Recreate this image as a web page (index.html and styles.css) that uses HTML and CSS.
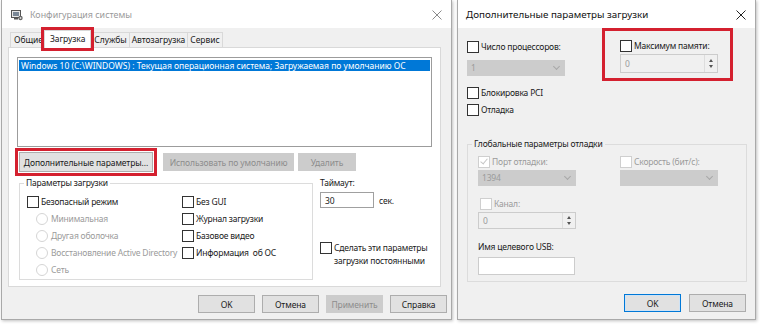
FILE: index.html
```html
<html>
<head>
    <meta charset="utf-8">
    <link rel="stylesheet" href="styles.css">
</head>
<body>
<div class="desk">

    <section class="win win-config">
        <header class="titlebar">
            <svg class="app-icon" width="12" height="12" viewBox="0 0 12 12">
                <rect x="0.5" y="1.5" width="9" height="7" fill="#e8e8e8" stroke="#555"/>
                <rect x="2" y="3" width="6" height="4" fill="#7a8796"/>
                <rect x="3" y="9" width="4" height="1.5" fill="#555"/>
                <circle cx="9.5" cy="9" r="2.2" fill="#666"/>
                <circle cx="9.5" cy="9" r="0.9" fill="#ddd"/>
            </svg>
            <span class="title inactive">Конфигурация системы</span>
            <svg class="close" width="10" height="10" viewBox="0 0 10 10">
                <path d="M0.5 0.5L9.5 9.5M9.5 0.5L0.5 9.5" stroke="#8a8a8a" stroke-width="1"/>
            </svg>
        </header>
        <div class="win-body">
            <div class="tabs">
                <span class="tab">Общие</span><span class="tab active">Загрузка</span><span class="tab">Службы</span><span class="tab">Автозагрузка</span><span class="tab">Сервис</span>
            </div>
            <div class="tab-page">
                <div class="listbox">
                    <div class="list-item selected">Windows 10 (C:\WINDOWS) : Текущая операционная система; Загружаемая по умолчанию ОС</div>
                </div>
                <div class="btn-row">
                    <span class="mark"><button class="btn btn-wide">Дополнительные параметры...</button></span>
                    <button class="btn btn-default-os" disabled>Использовать по умолчанию</button>
                    <button class="btn btn-delete" disabled>Удалить</button>
                </div>
                <div class="boot-area">
                    <fieldset class="group boot-group">
                        <legend>Параметры загрузки</legend>
                        <div class="boot-grid">
                            <div class="col">
                                <label class="check"><span class="box"></span>Безопасный режим</label>
                                <label class="radio off"><span class="dot"></span>Минимальная</label>
                                <label class="radio off"><span class="dot"></span>Другая оболочка</label>
                                <label class="radio off"><span class="dot"></span>Восстановление Active Directory</label>
                                <label class="radio off"><span class="dot"></span>Сеть</label>
                            </div>
                            <div class="col">
                                <label class="check"><span class="box"></span>Без GUI</label>
                                <label class="check"><span class="box"></span>Журнал загрузки</label>
                                <label class="check"><span class="box"></span>Базовое видео</label>
                                <label class="check"><span class="box"></span>Информация&nbsp; об ОС</label>
                            </div>
                        </div>
                    </fieldset>
                    <div class="timeout">
                        <div class="field-label">Таймаут:</div>
                        <div class="timeout-row">
                            <span class="textbox timeout-box">30</span>
                            <span>сек.</span>
                        </div>
                        <label class="check check-top permanent"><span class="box"></span>Сделать эти параметры<br>загрузки постоянными</label>
                    </div>
                </div>
            </div>
            <div class="dlg-buttons">
                <button class="btn">OK</button>
                <button class="btn">Отмена</button>
                <button class="btn" disabled>Применить</button>
                <button class="btn">Справка</button>
            </div>
        </div>
    </section>

    <section class="win win-advanced">
        <header class="titlebar">
            <span class="title">Дополнительные параметры загрузки</span>
            <svg class="close" width="10" height="10" viewBox="0 0 10 10">
                <path d="M0.5 0.5L9.5 9.5M9.5 0.5L0.5 9.5" stroke="#222" stroke-width="1"/>
            </svg>
        </header>
        <div class="win-body adv-body">
            <div class="adv-top">
                <div class="adv-left">
                    <label class="check"><span class="box"></span>Число процессоров:</label>
                    <span class="select off">1<i class="chev"></i></span>
                    <label class="check pci"><span class="box"></span>Блокировка PCI</label>
                    <label class="check"><span class="box"></span>Отладка</label>
                </div>
                <div class="mark mark-mem">
                    <label class="check"><span class="box"></span>Максимум памяти:</label>
                    <span class="spin off">0<span class="spin-arrows"><i class="up"></i><i class="down"></i></span></span>
                </div>
            </div>
            <fieldset class="group debug-group">
                <legend>Глобальные параметры отладки</legend>
                <div class="debug-grid">
                    <div class="col">
                        <label class="check off"><span class="box checked"></span>Порт отладки:</label>
                        <span class="select off">1394<i class="chev"></i></span>
                        <label class="check off channel"><span class="box dim"></span>Канал:</label>
                        <span class="spin off">0<span class="spin-arrows"><i class="up"></i><i class="down"></i></span></span>
                        <div class="field-label usb-label">Имя целевого USB:</div>
                        <span class="textbox usb-box"></span>
                    </div>
                    <div class="col">
                        <label class="check off"><span class="box dim"></span>Скорость (бит/с):</label>
                        <span class="select off"><i class="chev"></i></span>
                    </div>
                </div>
            </fieldset>
            <div class="dlg-buttons">
                <button class="btn default">OK</button>
                <button class="btn">Отмена</button>
            </div>
        </div>
    </section>

</div>
</body>
</html>
```

FILE: styles.css
```css
body{
    margin: 0;
    background-color: #ffffff;
    color: #1a1a1a;
    font-family: "Noto Sans", "Open Sans", sans-serif;
    font-size: 8.5px;
    letter-spacing: -0.2px;
}

.desk{
    display: flex;
    gap: 5px;
    padding-left: 1px;
}

.win{
    height: 319px;
    border: 1px solid #a9a9a9;
    border-top: none;
    background-color: #f0f0f0;
    box-shadow: 1px 1px 3px rgba(0, 0, 0, 0.25);
    display: flex;
    flex-direction: column;
}

.win-config{
    width: 449px;
}

.win-advanced{
    width: 297px;
}

.titlebar{
    height: 28px;
    flex: none;
    display: flex;
    align-items: center;
    background-color: #ffffff;
    padding: 0 9px 0 8px;
}

.app-icon{
    margin: 1px 7px 0 1px;
}

.title{
    flex: 1;
    font-size: 9.8px;
    letter-spacing: 0;
    color: #111;
}

.title.inactive{
    font-size: 8.9px;
    color: #9a9a9a;
}

.close{
    margin-top: 2px;
}

.win-body{
    flex: 1;
    display: flex;
    flex-direction: column;
    padding: 2px 3px 0 6px;
}

/* tabs */

.tabs{
    display: flex;
    align-items: flex-end;
    height: 17px;
    padding-left: 2px;
    position: relative;
    z-index: 1;
    letter-spacing: -0.05px;
}

.tab{
    height: 14px;
    line-height: 14px;
    padding: 0 2px;
    border: 1px solid #d9d9d9;
    border-bottom: none;
    margin-right: -1px;
    background-color: #f0f0f0;
}

.tab:first-child{
    padding: 0 3px;
}

.tab.active{
    height: 17px;
    line-height: 16px;
    padding: 0 5px;
    background-color: #ffffff;
    margin: 0 0 -1px -2px;
    outline: 3px solid #d4202f;
    outline-offset: 0;
    position: relative;
}

.tab-page{
    height: 240px;
    width: 433px;
    border: 1px solid #d9d9d9;
    background-color: #ffffff;
    padding: 9px 8px 0 8px;
    box-sizing: border-box;
}

.listbox{
    height: 90px;
    border: 1px solid #9c9c9c;
    padding: 2px 1px;
    box-sizing: border-box;
}

.list-item{
    height: 11px;
    line-height: 11px;
    padding-left: 2px;
    white-space: nowrap;
    letter-spacing: 0;
}

.list-item.selected{
    background-color: #0078d7;
    color: #ffffff;
}

/* buttons */

.btn{
    font-family: inherit;
    font-size: 8.5px;
    letter-spacing: -0.1px;
    color: #1a1a1a;
    height: 18px;
    width: 57px;
    padding: 0;
    white-space: nowrap;
    background-color: #e1e1e1;
    border: 1px solid #adadad;
    border-radius: 0;
}

.btn[disabled]{
    background-color: #cccccc;
    border-color: #cccccc;
    color: #8d8d8d;
}

.btn.default{
    border-color: #0078d7;
    box-shadow: inset 0 0 0 1px #cfe3f5;
}

.btn-row{
    display: flex;
    align-items: center;
    height: 30px;
    margin-left: -2px;
}

.mark{
    border: 3px solid #d4202f;
}

.btn-row .mark{
    padding: 1px;
    margin-right: 6px;
}

.btn-wide{
    width: 134px;
    height: 20px;
}

.btn-default-os{
    width: 131px;
    margin-right: 4px;
}

.btn-delete{
    width: 58px;
}

/* checks and radios */

.check,
.radio{
    display: flex;
    align-items: center;
    height: 17px;
    white-space: nowrap;
}

.box{
    width: 10px;
    height: 10px;
    border: 1px solid #333;
    background-color: #ffffff;
    margin-right: 2px;
    flex: none;
    position: relative;
}

.box.dim,
.box.checked{
    border-color: #cfcfcf;
}

.box.checked:after{
    content: "";
    position: absolute;
    left: 3px;
    top: 0;
    width: 3px;
    height: 6px;
    border: solid #c6c6c6;
    border-width: 0 1.5px 1.5px 0;
    transform: rotate(40deg);
}

.dot{
    width: 10px;
    height: 10px;
    border: 1px solid #d5d5d5;
    border-radius: 50%;
    margin: 0 3px 0 9px;
    flex: none;
}

.off{
    color: #9b9b9b;
}

/* boot options */

.boot-area{
    display: flex;
}

.group{
    margin: 0;
    border: 1px solid #dcdcdc;
    padding: 0;
    box-sizing: border-box;
}

.group legend{
    padding: 0 2px;
    line-height: 12px;
}

.boot-group{
    width: 294px;
    height: 103px;
    padding: 4px 0 0 7px;
    margin-left: 2px;
}

.boot-group legend{
    margin-left: -3px;
}

.boot-grid{
    display: grid;
    grid-template-columns: 155px 1fr;
}

.timeout{
    margin-left: 7px;
}

.field-label{
    line-height: 12px;
}

.timeout-row{
    display: flex;
    align-items: center;
    gap: 5px;
    margin-top: 3px;
}

.textbox{
    display: block;
    height: 15px;
    line-height: 15px;
    border: 1px solid #a0a0a0;
    background-color: #ffffff;
    padding-left: 4px;
    box-sizing: border-box;
}

.timeout-box{
    width: 54px;
    height: 16px;
}

.check-top{
    align-items: flex-start;
    height: auto;
    line-height: 13px;
}

.check-top .box{
    margin-top: 1px;
}

.permanent{
    margin-top: 33px;
}

.dlg-buttons{
    display: flex;
    justify-content: flex-end;
    gap: 7px;
    margin-top: 8px;
    padding-right: 1px;
}

/* advanced dialog */

.adv-body{
    padding: 0 8px 0 9px;
}

.adv-top{
    display: flex;
    height: 110px;
}

.adv-left{
    width: 135px;
    padding-top: 10px;
    display: flex;
    flex-direction: column;
    align-items: flex-start;
}

.select{
    display: block;
    width: 98px;
    height: 16px;
    line-height: 16px;
    background-color: #cccccc;
    padding-left: 4px;
    box-sizing: border-box;
    position: relative;
}

.adv-left .select{
    margin-top: 5px;
}

.chev{
    position: absolute;
    right: 6px;
    top: 4px;
    width: 4px;
    height: 4px;
    border: solid #a8a8a8;
    border-width: 0 1px 1px 0;
    transform: rotate(45deg);
}

.pci{
    margin-top: 8px;
}

.mark-mem{
    align-self: flex-start;
    padding: 6px 12px 5px 15px;
}

.spin{
    display: block;
    width: 98px;
    height: 19px;
    line-height: 17px;
    border: 1px solid #cccccc;
    background-color: #f0f0f0;
    padding-left: 4px;
    box-sizing: border-box;
    position: relative;
}

.spin-arrows{
    position: absolute;
    right: 0;
    top: 0;
    bottom: 0;
    width: 12px;
    border-left: 1px solid #dddddd;
    display: flex;
    flex-direction: column;
    align-items: center;
    justify-content: space-evenly;
}

.spin-arrows i{
    width: 0;
    height: 0;
    border-left: 2.5px solid transparent;
    border-right: 2.5px solid transparent;
}

.spin-arrows .up{
    border-bottom: 3px solid #555;
}

.spin-arrows .down{
    border-top: 3px solid #555;
}

.debug-group{
    height: 144px;
    padding: 3px 0 0 10px;
}

.debug-group legend{
    margin-left: -6px;
}

.debug-grid{
    display: grid;
    grid-template-columns: 142px 1fr;
}

.debug-grid .col{
    display: flex;
    flex-direction: column;
    align-items: flex-start;
}

.debug-grid .spin{
    height: 17px;
    line-height: 15px;
}

.channel{
    margin-top: 9px;
}

.channel .box{
    margin-left: 2px;
}

.usb-label{
    margin-top: 12px;
}

.usb-box{
    width: 97px;
    height: 18px;
    margin-top: 4px;
    border-color: #cccccc;
}

.adv-body .dlg-buttons{
    margin-top: 12px;
    gap: 8px;
}
```
